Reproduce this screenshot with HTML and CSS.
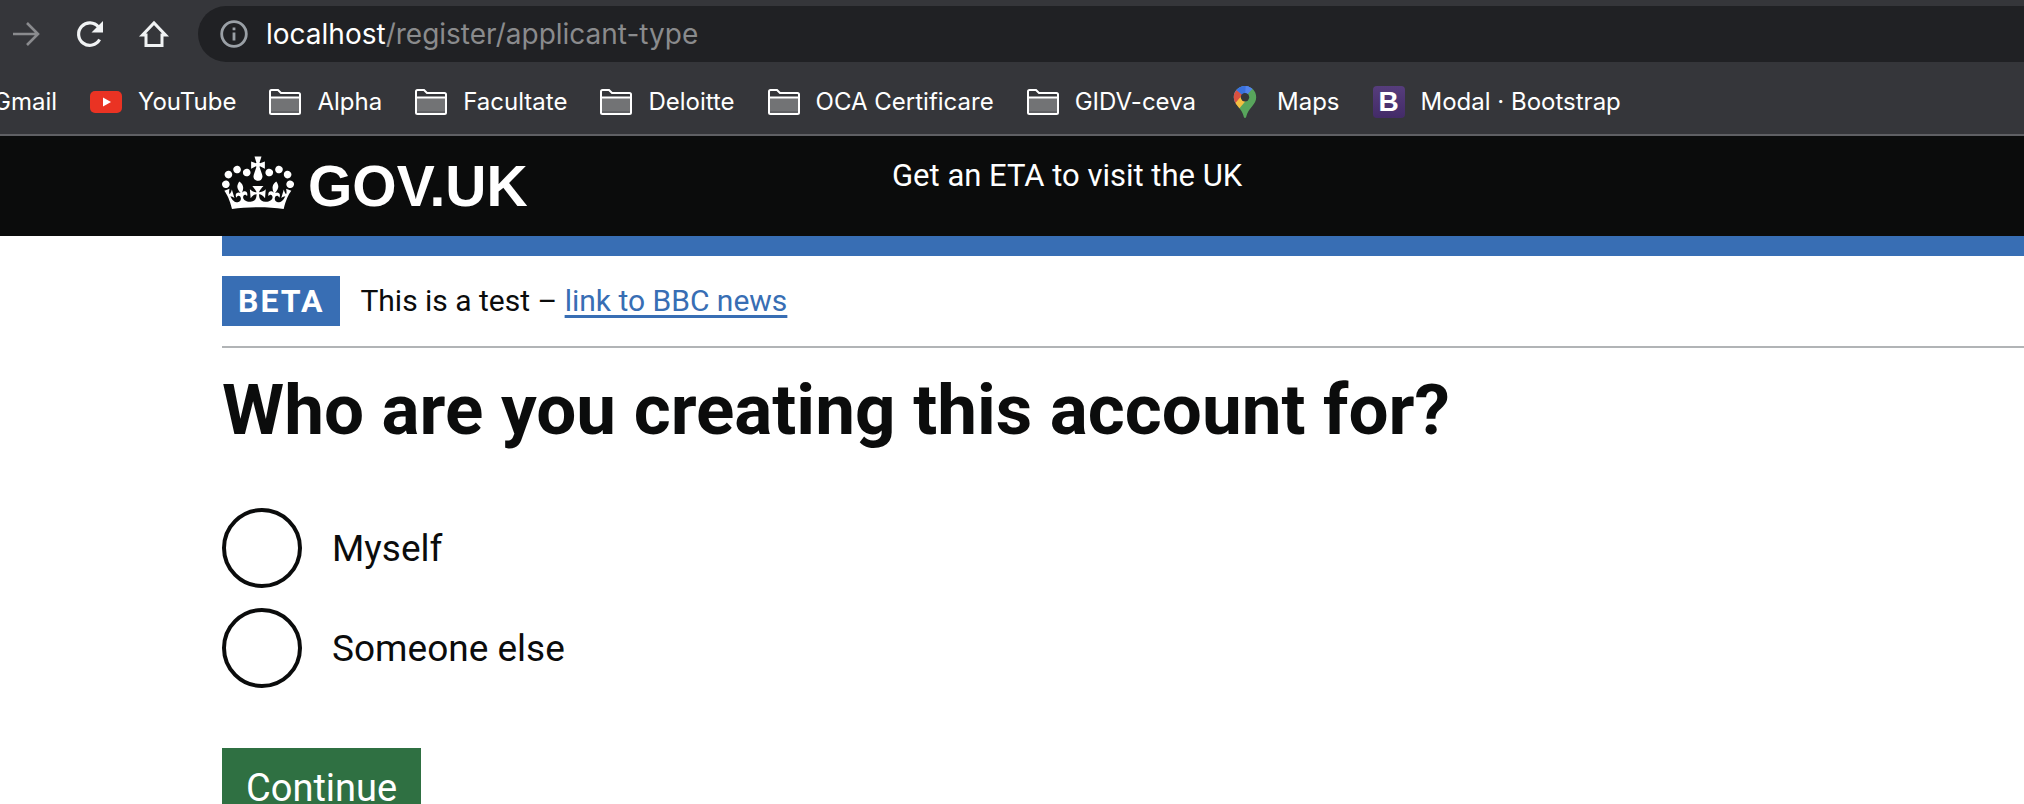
FILE: index.html
```html
<!DOCTYPE html>
<html lang="en">
<head>
<meta charset="utf-8">
<title>Who are you creating this account for?</title>
<link rel="stylesheet" href="styles.css">
</head>
<body>
<svg class="sprite" aria-hidden="true">
  <symbol id="folder" viewBox="0 0 32 32">
    <path d="M2 11h28v16H2z" fill="#727375"/>
    <path d="M2 25h28v2H2z" fill="#5f6063"/>
    <path d="M1 27V5.500Q1 4 2.500 4H9l3 3h17.500Q31 7 31 8.500V26.500Q31 28 29.500 28H2.500Q1 28 1 26.500zM1 11.500h30" fill="none" stroke="#fff" stroke-width="2"/>
  </symbol>
</svg>

<div class="toolbar">
  <button class="tool" aria-label="Forward">
    <svg viewBox="0 0 32 32"><path d="M3 16h25M17 5l11 11-11 11" fill="none" stroke="#8a8b8e" stroke-width="2.600"/></svg>
  </button>
  <button class="tool" aria-label="Reload">
    <svg viewBox="0 0 32 32"><path d="M25.600 21.500A11.200 11.200 0 1 1 24.500 9" fill="none" stroke="#f1f3f4" stroke-width="3.200"/><path d="M29 3v11.500H17.500z" fill="#f1f3f4"/></svg>
  </button>
  <button class="tool" aria-label="Home">
    <svg viewBox="0 0 32 32"><path d="M4.500 17L16 5l11.500 12H24v10.500H8V17z" fill="none" stroke="#f1f3f4" stroke-width="3"/></svg>
  </button>
  <div class="address">
    <svg class="info" viewBox="0 0 28 28"><circle cx="14" cy="14" r="12.300" fill="none" stroke="#9aa0a6" stroke-width="2.800"/><path d="M12.600 12.500h2.800v8h-2.800zM12.600 7.500h2.800v2.800h-2.800z" fill="#9aa0a6"/></svg>
    <span class="url"><span class="host">localhost</span>/register/applicant-type</span>
  </div>
</div>

<nav class="bookmarks" aria-label="Bookmarks">
  <a class="bookmark" href="#">Gmail</a>
  <a class="bookmark" href="#"><svg viewBox="0 0 32 32"><rect y="5" width="32" height="22" rx="5" fill="#ea3323"/><path d="M13 11.500l8 4.500-8 4.500z" fill="#fff"/></svg>YouTube</a>
  <a class="bookmark" href="#"><svg><use href="#folder"/></svg>Alpha</a>
  <a class="bookmark" href="#"><svg><use href="#folder"/></svg>Facultate</a>
  <a class="bookmark" href="#"><svg><use href="#folder"/></svg>Deloitte</a>
  <a class="bookmark" href="#"><svg><use href="#folder"/></svg>OCA Certificare</a>
  <a class="bookmark" href="#"><svg><use href="#folder"/></svg>GIDV-ceva</a>
  <a class="bookmark" href="#"><svg viewBox="0 0 32 32">
    <clipPath id="pin"><path d="M16 0C9.600 0 4.800 5 4.800 11.200c0 3.600 1.600 6 4 9 3 3.600 4.800 6 5.600 9.400.4 1.500.6 2.400 1.600 2.400s1.200-.9 1.600-2.400c.8-3.400 2.600-5.800 5.600-9.400 2.400-3 4-5.400 4-9C27.200 5 22.400 0 16 0z"/></clipPath>
    <clipPath id="low"><path d="M5 18.500L12.500 9.500 20 14 9.500 26z"/></clipPath>
    <g clip-path="url(#pin)"><path d="M0 0h32v32H0z" fill="#58a55c"/><path d="M0 24L26 -5l-26-3z" fill="#5383ec"/><path d="M16 11L7.500 4 0 14l4 10 7-7z" fill="#d85140"/><path d="M7.500 4L16 11l5-10-8-4z" fill="#3a71de"/><path d="M16 11L26 0l-9-5z" fill="#5383ec"/><path d="M5 18.500L19.500 1.500 26 4 9 24z" fill="#f2bf42" clip-path="url(#low)"/></g>
    <circle cx="16" cy="11.200" r="4.200" fill="#35363a"/></svg>Maps</a>
  <a class="bookmark" href="#"><span class="bootstrap">B</span>Modal · Bootstrap</a>
</nav>

<header class="header">
  <a class="logo" href="#">
    <svg viewBox="0 0 132 97" aria-hidden="true"><path fill="currentColor" fill-rule="evenodd" d="M25 30.2c3.5 1.5 7.7-.2 9.1-3.7 1.5-3.6-.2-7.8-3.9-9.2-3.6-1.4-7.6.3-9.1 3.9-1.4 3.5.3 7.5 3.9 9zM9 39.500c3.600 1.500 7.800-.2 9.200-3.700 1.500-3.600-.2-7.800-3.900-9.100-3.600-1.500-7.600.2-9.100 3.800-1.400 3.500.3 7.500 3.800 9zM4.400 57.200c3.500 1.500 7.700-.2 9.100-3.800 1.500-3.600-.2-7.700-3.900-9.100-3.500-1.500-7.600.3-9.100 3.800-1.400 3.500.3 7.600 3.900 9.100zm38.300-21.400c3.500 1.500 7.700-.2 9.100-3.800 1.500-3.600-.2-7.700-3.900-9.100-3.600-1.500-7.600.3-9.100 3.800-1.300 3.600.4 7.700 3.900 9.100zm64.400-5.600c-3.600 1.500-7.800-.2-9.100-3.700-1.500-3.600.2-7.800 3.800-9.200 3.600-1.400 7.700.3 9.200 3.900 1.300 3.500-.4 7.500-3.900 9zm15.900 9.300c-3.600 1.500-7.700-.2-9.100-3.700-1.500-3.600.2-7.800 3.700-9.100 3.600-1.500 7.700.2 9.200 3.800 1.500 3.500-.3 7.500-3.800 9zm4.700 17.700c-3.600 1.500-7.800-.2-9.200-3.800-1.500-3.600.2-7.700 3.900-9.100 3.600-1.500 7.700.3 9.200 3.800 1.300 3.500-.4 7.600-3.900 9.100zM89.300 35.800c-3.600 1.500-7.800-.2-9.200-3.800-1.400-3.600.2-7.700 3.900-9.100 3.600-1.500 7.700.3 9.200 3.800 1.400 3.600-.3 7.700-3.900 9.100zM69.700 17.700l8.900 4.700V9.300l-8.900 2.800c-.2-.3-.5-.6-.9-.9L72.400 0H59.600l3.500 11.200c-.3.3-.6.5-.9.9l-8.800-2.800v13.100l8.800-4.700c.3.3.6.7.9.9l-5 15.400v.1c-.2.8-.4 1.600-.4 2.400 0 4.100 3.100 7.500 7 8.100h.2c.3 0 .7.1 1 .1.4 0 .7 0 1-.1h.2c4-.6 7.100-4.100 7.100-8.100 0-.8-.1-1.700-.4-2.400V34l-5.100-15.400c.4-.2.7-.6 1-.9zM66 92.800c16.900 0 32.800 1.100 47.100 3.200 4-16.900 8.900-26.700 14-33.500l-9.600-3.400c1 4.900 1.100 7.200 0 10.200-1.500-1.400-3-4.300-4.200-8.700L108.600 76c2.800-2 5-3.200 7.500-3.300-4.400 9.400-10 11.900-13.600 11.200-4.300-.8-6.300-4.600-5.600-7.900 1-4.700 5.700-5.900 8-.5 4.300-8.700-3-11.400-7.600-8.800 7.100-7.200 7.900-13.500 2.100-21.100-8 6.100-8.100 12.300-4.500 20.800-4.700-5.400-12.100-2.500-9.500 6.200 3.400-5.200 7.900-2 7.200 3.100-.6 4.300-6.400 7.800-13.500 7.200-10.300-.9-10.900-8-11.200-13.800 2.500-.5 7.100 1.800 11 7.300L80.200 60c-4.100 4.400-8 5.300-12.300 5.400 1.400-4.400 8-11.600 8-11.600H55.500s6.400 7.200 7.900 11.600c-4.200-.1-8-1-12.300-5.400l1.400 16.400c3.900-5.500 8.500-7.700 10.900-7.300-.3 5.800-.9 12.800-11.100 13.800-7.200.6-12.900-2.900-13.500-7.200-.7-5 3.800-8.300 7.100-3.100 2.700-8.700-4.600-11.600-9.400-6.200 3.700-8.500 3.600-14.700-4.600-20.800-5.800 7.600-5 13.900 2.200 21.100-4.700-2.600-11.900.1-7.700 8.800 2.300-5.500 7.100-4.200 8.100.5.7 3.300-1.300 7.100-5.700 7.900-3.500.7-9-1.800-13.500-11.200 2.500.1 4.700 1.300 7.500 3.300l-4.700-15.400c-1.200 4.400-2.700 7.200-4.300 8.700-1.100-3-.9-5.300 0-10.200l-9.500 3.400c5 6.900 9.900 16.700 14 33.500 14.800-2.100 30.800-3.200 47.700-3.200z"/></svg>
    <span>GOV.UK</span>
  </a>
  <a class="service" href="#">Get an ETA to visit the UK</a>
</header>

<div class="container">
  <div class="phase">
    <strong class="tag">BETA</strong>
    <span>This is a test – <a href="#">link to BBC news</a></span>
  </div>
  <main>
    <form>
      <fieldset>
        <legend><h1>Who are you creating this account for?</h1></legend>
        <div class="radios">
          <div class="radio"><input type="radio" name="applicant" id="myself"><label for="myself">Myself</label></div>
          <div class="radio"><input type="radio" name="applicant" id="other"><label for="other">Someone else</label></div>
        </div>
      </fieldset>
      <button class="continue" type="button">Continue</button>
    </form>
  </main>
</div>
</body>
</html>
```

FILE: styles.css
```css
* { box-sizing: border-box; }

body {
  margin: 0;
  height: 100vh;
  overflow: hidden;
  background: #fff;
  color: #0b0c0c;
  font-family: Roboto, "Liberation Sans", sans-serif;
  font-size: 31px;
  line-height: 40px;
}

button { padding: 0; border: 0; background: none; font: inherit; }
svg { display: block; }
.sprite { display: none; }

/* Browser chrome */
.toolbar {
  display: flex;
  align-items: center;
  gap: 32px;
  height: 68px;
  padding-left: 10px;
  background: #35363a;
}
.tool svg { width: 32px; height: 32px; }
.address {
  display: flex;
  flex: 1;
  align-items: center;
  gap: 18px;
  height: 56px;
  margin-left: -4px;
  padding-left: 22px;
  border-radius: 28px 0 0 28px;
  background: #202124;
  font-family: Inter, sans-serif;
  font-size: 28px;
  color: #8a8b8d;
}
.info { width: 28px; height: 28px; }
.host { color: #fff; }

.bookmarks {
  display: flex;
  align-items: center;
  gap: 33px;
  height: 68px;
  padding-top: 2px;
  border-bottom: 2px solid #5f6064;
  background: #35363a;
  font-family: Inter, sans-serif;
  font-size: 24px;
  white-space: nowrap;
}
.bookmark {
  display: flex;
  align-items: center;
  gap: 16px;
  color: #fff;
  text-decoration: none;
}
.bookmark:first-child { margin-left: -7px; }
.bookmark svg { width: 32px; height: 32px; }
.bootstrap {
  width: 32px;
  height: 32px;
  border-radius: 4px;
  background: linear-gradient(#563d7c, #432b68);
  font-family: "Liberation Sans", sans-serif;
  font-size: 28px;
  font-weight: 700;
  line-height: 32px;
  text-align: center;
}

/* Service header */
.header {
  display: grid;
  grid-template-columns: 670px 1fr;
  height: 100px;
  padding: 20px 0 0 222px;
  background: #0b0c0c;
}
.header a { color: #fff; text-decoration: none; }
.logo {
  display: flex;
  gap: 14px;
  font-family: "Liberation Sans", sans-serif;
  font-size: 57px;
  font-weight: 700;
  line-height: 60px;
}
.logo svg { width: 72px; height: 54px; }

.container {
  margin-left: 222px;
  border-top: 20px solid #386eb4;
}
.phase {
  display: flex;
  align-items: center;
  gap: 20px;
  padding: 20px 0;
  border-bottom: 2px solid #b1b4b6;
  font-size: 30px;
}
.phase a {
  color: #386eb4;
  text-decoration-thickness: 3px;
  text-underline-offset: 4px;
}
.tag {
  padding: 5px 16px;
  background: #386eb4;
  color: #fff;
  font-size: 32px;
  letter-spacing: 2px;
}

fieldset { margin: 0; padding: 0; border: 0; }
legend { padding: 0; }
h1 {
  margin: 22px 0 58px;
  font-size: 71px;
  font-weight: 700;
  line-height: 80px;
}
.radios { display: grid; gap: 20px; }
.radio {
  display: flex;
  align-items: center;
  gap: 30px;
  font-size: 37px;
}
.radio label { padding-top: 2px; }
.radio input {
  appearance: none;
  width: 80px;
  height: 80px;
  margin: 0;
  border: 4px solid #0b0c0c;
  border-radius: 50%;
}
.radio input:checked { box-shadow: inset 0 0 0 16px #fff; background: #0b0c0c; }
.continue {
  margin-top: 60px;
  padding: 20px 24px 16px;
  background: #2f7042;
  box-shadow: 0 4px 0 #002d18;
  color: #fff;
  font-size: 38px;
}
```
